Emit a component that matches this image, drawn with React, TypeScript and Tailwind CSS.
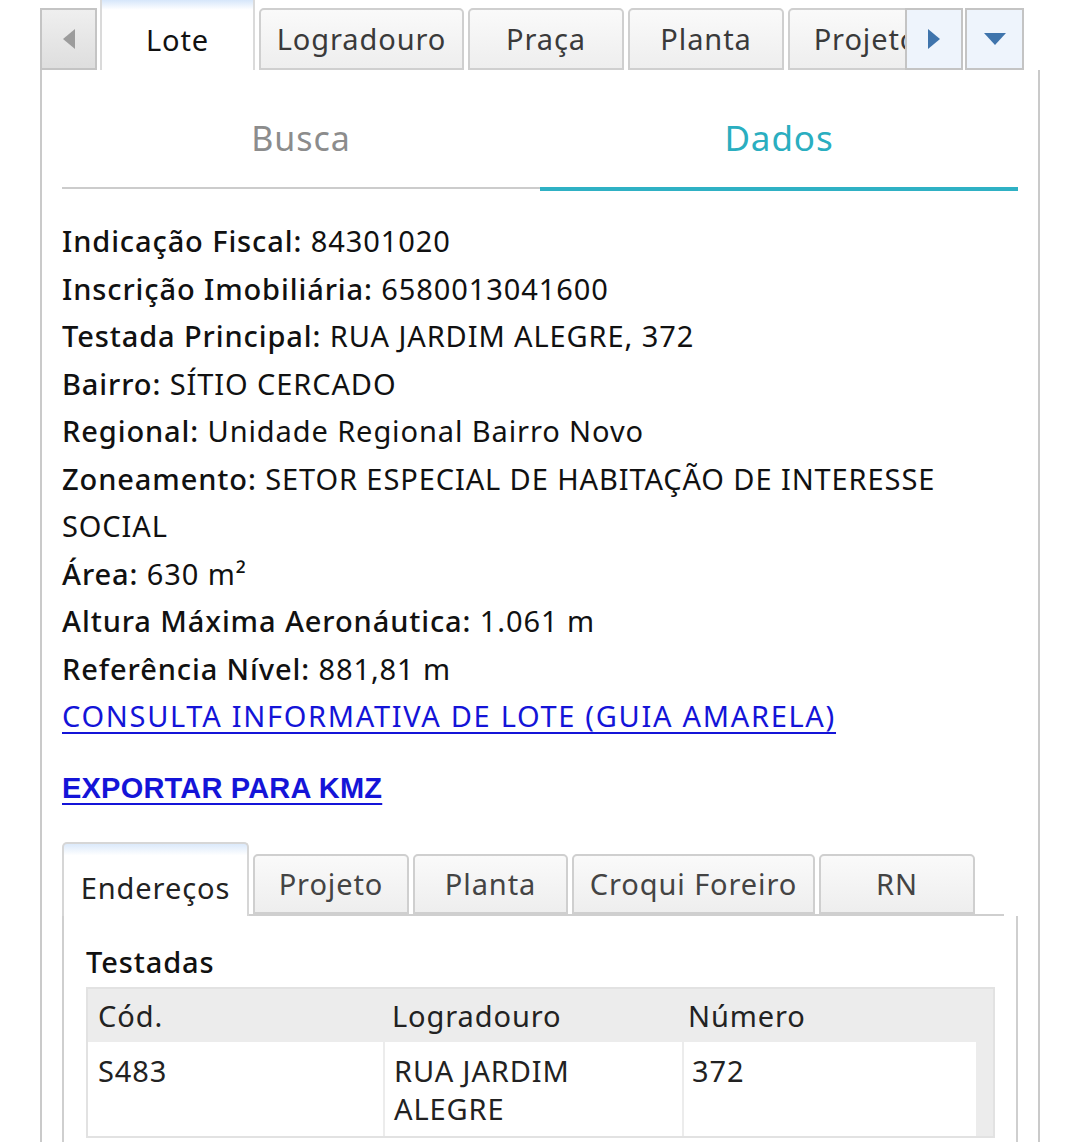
import React from 'react'

const font = { fontFamily: '"Noto Sans", "Liberation Sans", sans-serif' }

const fields: { label: string; value: string }[] = [
  { label: 'Indicação Fiscal:', value: '84301020' },
  { label: 'Inscrição Imobiliária:', value: '6580013041600' },
  { label: 'Testada Principal:', value: 'RUA JARDIM ALEGRE, 372' },
  { label: 'Bairro:', value: 'SÍTIO CERCADO' },
  { label: 'Regional:', value: 'Unidade Regional Bairro Novo' },
  { label: 'Zoneamento:', value: 'SETOR ESPECIAL DE HABITAÇÃO DE INTERESSE SOCIAL' },
  { label: 'Área:', value: '630 m²' },
  { label: 'Altura Máxima Aeronáutica:', value: '1.061 m' },
  { label: 'Referência Nível:', value: '881,81 m' }
]

function TopTab({ label, width }: { label: string; width: string }) {
  return (
    <div
      className={`${width} h-[62px] shrink-0 rounded-t-[5px] border-2 border-[#cfcfcf] bg-gradient-to-b from-[#fafafa] to-[#eeeeee] flex items-center justify-center text-[29px] text-[#3a3a3a]`}
    >
      {label}
    </div>
  )
}

function InnerTab({ label, width }: { label: string; width: string }) {
  return (
    <div
      className={`${width} h-[60px] shrink-0 rounded-t-[5px] border-2 border-[#cfcfcf] bg-gradient-to-b from-[#fafafa] to-[#eeeeee] flex items-center justify-center text-[29px] text-[#444]`}
    >
      {label}
    </div>
  )
}

export default function App() {
  return (
    <div className="w-[1080px] h-[1142px] overflow-hidden bg-white text-[#111] tracking-[0.9px]" style={font}>
      <div className="pl-[40px] pr-[40px]">
        {/* top tab strip */}
        <div className="flex items-end h-[70px] pr-[16px]">
          <div className="w-[57px] h-[62px] shrink-0 border-2 border-[#c4c4c4] bg-gradient-to-b from-[#efefef] to-[#dedede] flex items-center justify-center">
            <svg width="14" height="22" viewBox="0 0 14 22">
              <path d="M13 1 L1 11 L13 21 Z" fill="#9c9c9c" />
            </svg>
          </div>
          <div className="flex-1 overflow-hidden flex items-end gap-[4px] pl-[3px]">
            <div className="w-[155px] h-[70px] shrink-0 border-x-2 border-[#dadada] bg-gradient-to-b from-[#d6e6fa] via-white via-[14%] to-white flex items-center justify-center pt-[10px] text-[29px] text-[#111]">
              Lote
            </div>
            <TopTab label="Logradouro" width="w-[205px]" />
            <TopTab label="Praça" width="w-[156px]" />
            <TopTab label="Planta" width="w-[156px]" />
            <TopTab label="Projeto" width="w-[156px]" />
          </div>
          <div className="w-[58px] h-[62px] shrink-0 border-2 border-[#c4c4c4] bg-[#eef4fc] flex items-center justify-center">
            <svg width="14" height="22" viewBox="0 0 14 22">
              <path d="M1 1 L13 11 L1 21 Z" fill="#3f74ac" />
            </svg>
          </div>
          <div className="w-[59px] h-[62px] shrink-0 ml-[2px] border-2 border-[#c4c4c4] bg-[#eef4fc] flex items-center justify-center">
            <svg width="24" height="14" viewBox="0 0 24 14">
              <path d="M1 1 L23 1 L12 13 Z" fill="#3f74ac" />
            </svg>
          </div>
        </div>

        {/* main panel */}
        <div className="border-x-2 border-[#cacaca] pl-[20px] pr-[20px] pb-[20px]">
          <div className="flex pt-[28px]">
            <div className="flex-1 h-[91px] flex items-start justify-center border-b-2 border-[#cccccc] pt-[17px]">
              <span className="text-[34px] leading-[46px] text-[#8c8c8c]">Busca</span>
            </div>
            <div className="flex-1 h-[93px] flex items-start justify-center border-b-4 border-[#2fb1c4] pt-[17px]">
              <span className="text-[35px] leading-[46px] text-[#2aaec0]">Dados</span>
            </div>
          </div>

          <div className="pt-[26px] text-[29px] leading-[47.5px]">
            {fields.map(f => (
              <div key={f.label}>
                <span className="font-medium">{f.label}</span> <span>{f.value}</span>
              </div>
            ))}
            <div>
              <a href="#" className="text-[#1414d8] underline underline-offset-[5px] tracking-[1.7px]">
                CONSULTA INFORMATIVA DE LOTE (GUIA AMARELA)
              </a>
            </div>
            <div className="pt-[23px]">
              <a
                href="#"
                className="text-[#1414d8] underline underline-offset-[5px] font-bold text-[29px] tracking-[0.2px]"
                style={{ fontFamily: '"Liberation Sans", Arial, sans-serif' }}
              >
                EXPORTAR PARA KMZ
              </a>
            </div>
          </div>

          {/* inner tabs */}
          <div className="mt-[30px]">
            <div className="flex items-end gap-[4px] w-[942px] border-b-2 border-[#cfcfcf]">
              <div className="w-[187px] h-[74px] shrink-0 -mb-[2px] rounded-t-[5px] border-x-2 border-t-2 border-[#d6d6d6] bg-gradient-to-b from-[#dbe9fa] via-white via-[16%] to-white flex items-center justify-center pt-[16px] text-[29px] text-[#222]">
                Endereços
              </div>
              <InnerTab label="Projeto" width="w-[156px]" />
              <InnerTab label="Planta" width="w-[155px]" />
              <InnerTab label="Croqui Foreiro" width="w-[243px]" />
              <InnerTab label="RN" width="w-[156px]" />
            </div>
            <div className="w-[956px] border-x-2 border-[#cfcfcf] pl-[22px] pr-[21px] pt-[26px] pb-[20px]">
              <div className="text-[29px] font-medium leading-[40px]">Testadas</div>
              <div className="mt-[5px] bg-[#ececec] border-2 border-[#e2e2e2] pr-[17px]">
                <div className="grid grid-cols-[295px_297px_1fr] h-[53px] items-center text-[29px] text-[#222]">
                  <div className="pl-[10px]">Cód.</div>
                  <div className="pl-[9px]">Logradouro</div>
                  <div className="pl-[8px]">Número</div>
                </div>
                <div className="grid grid-cols-[295px_297px_1fr] gap-[2px] text-[29px] leading-[38px] text-[#222]">
                  <div className="bg-white h-[94px] pl-[10px] pt-[10px]">S483</div>
                  <div className="bg-white h-[94px] pl-[9px] pt-[10px]">
                    RUA JARDIM
                    <br />
                    ALEGRE
                  </div>
                  <div className="bg-white h-[94px] pl-[8px] pt-[10px]">372</div>
                </div>
              </div>
            </div>
          </div>
        </div>
      </div>
    </div>
  )
}
